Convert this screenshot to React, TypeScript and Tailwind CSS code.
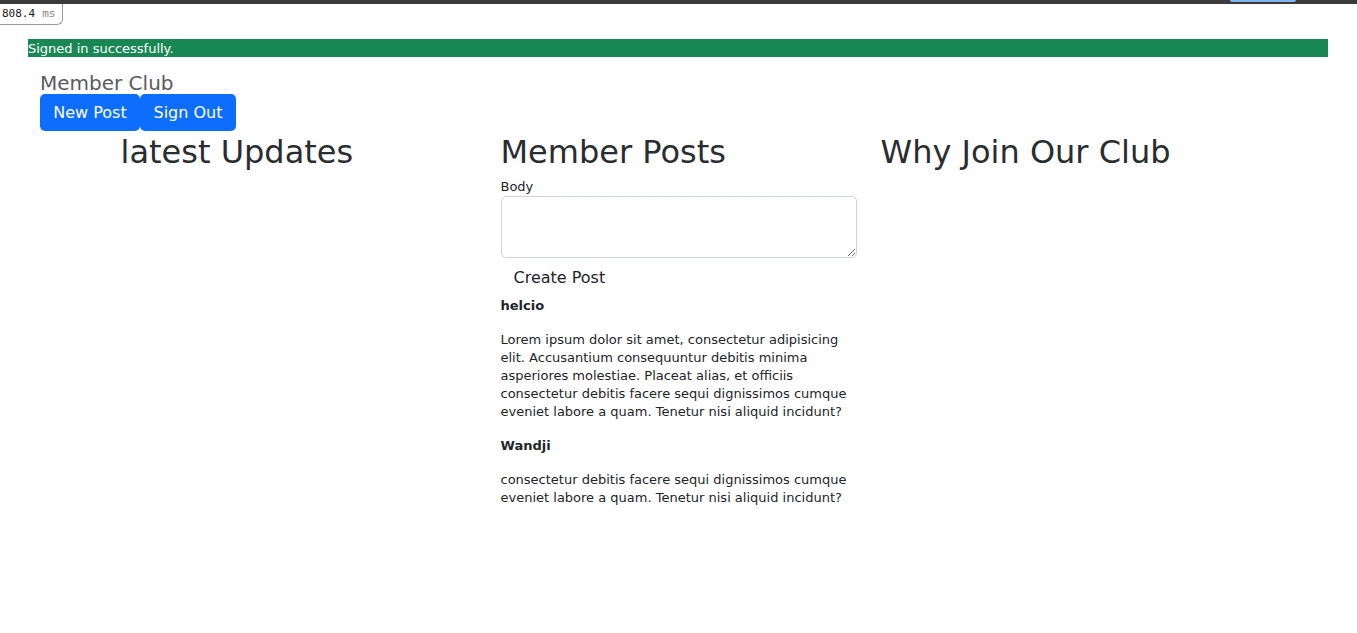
import React from 'react';

const posts = [
  {
    author: 'helcio',
    body:
      'Lorem ipsum dolor sit amet, consectetur adipisicing elit. Accusantium consequuntur debitis minima asperiores molestiae. Placeat alias, et officiis consectetur debitis facere sequi dignissimos cumque eveniet labore a quam. Tenetur nisi aliquid incidunt?',
  },
  {
    author: 'Wandji',
    body: 'consectetur debitis facere sequi dignissimos cumque eveniet labore a quam. Tenetur nisi aliquid incidunt?',
  },
];

const App: React.FC = () => {
  return (
    <div className="min-h-screen bg-white font-['DejaVu_Sans',sans-serif] text-[13px] leading-[18px] text-[#212529]">
      {/* browser strip */}
      <div className="relative h-[4px] bg-[#3b3b3b]">
        <div className="absolute left-[1230px] top-0 h-[2px] w-[66px] rounded-b bg-[#7fb6ef]" />
      </div>

      {/* timing badge */}
      <div className="inline-flex h-[21px] w-[63px] items-center gap-[7px] rounded-br-[6px] border-r border-b border-[#9a9a9a] pl-[2px] font-['DejaVu_Sans_Mono',monospace] text-[11px]">
        <span className="text-[#1a1a1a]">808.4</span>
        <span className="text-[#888]">ms</span>
      </div>

      {/* flash */}
      <div className="mx-[28px] mt-[14px] h-[18px] w-[1300px] bg-[#198754] pt-[1px] text-[13px] leading-[18px] text-white">
        Signed in successfully.
      </div>

      {/* header */}
      <div className="mt-[14px] px-[40px]">
        <div className="pt-[1px] text-[20px] leading-[22px] text-[#595c5f]">Member Club</div>
        <div className="flex">
          <button className="h-[37px] w-[100px] rounded-[5px] bg-[#0d6efd] text-[16px] text-white">New Post</button>
          <button className="h-[37px] w-[96px] rounded-[5px] bg-[#0d6efd] text-[16px] text-white">Sign Out</button>
        </div>
      </div>

      {/* columns */}
      <div className="mx-auto grid w-[1140px] grid-cols-3">
        <div className="px-[12px]">
          <h2 className="mb-[5px] text-[32px] leading-[42px] text-[#2a2d30]">latest Updates</h2>
        </div>

        <div className="px-[12px]">
          <h2 className="mb-[5px] text-[32px] leading-[42px] text-[#2a2d30]">Member Posts</h2>
          <label className="block">Body</label>
          <textarea className="block h-[62px] w-full rounded-[5px] border border-[#ced4da] bg-white" />
          <button className="h-[39px] px-[13px] pt-[1px] text-[16px] leading-[24px]">Create Post</button>
          {posts.map((p) => (
            <div key={p.author}>
              <p className="mb-[16px] font-bold">{p.author}</p>
              <p className="mb-[16px]">{p.body}</p>
            </div>
          ))}
        </div>

        <div className="px-[12px]">
          <h2 className="mb-[5px] text-[32px] leading-[42px] text-[#2a2d30]">Why Join Our Club</h2>
        </div>
      </div>
    </div>
  );
};

export default App;
